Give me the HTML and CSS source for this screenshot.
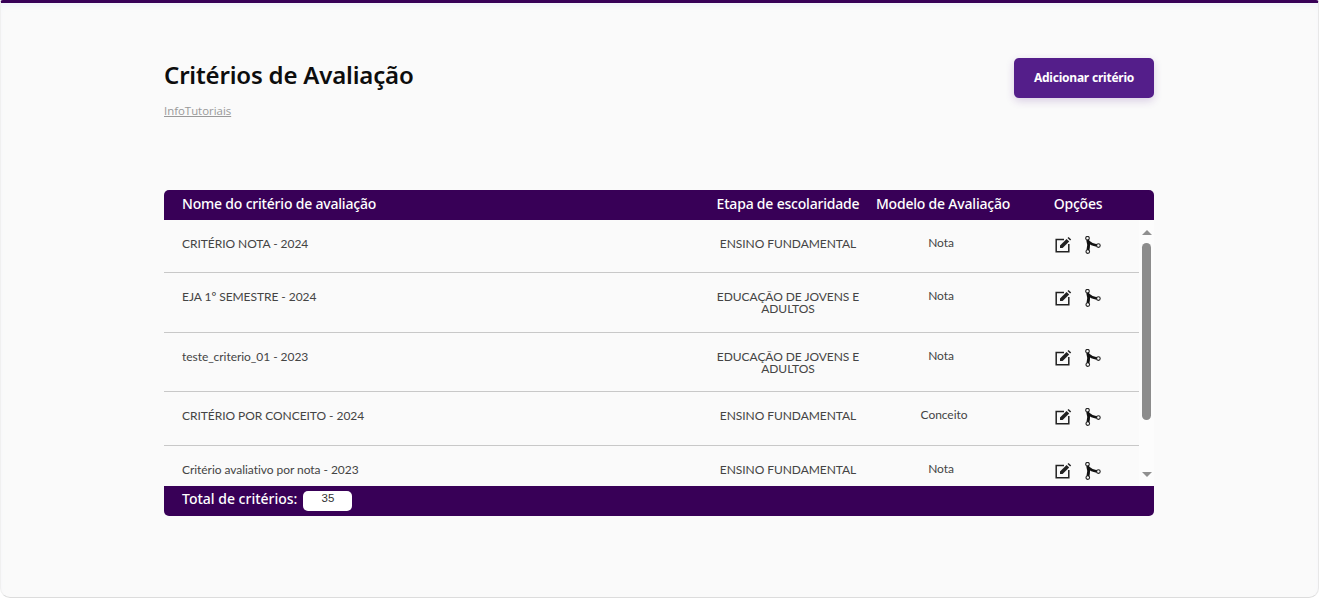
FILE: index.html
```html
<!DOCTYPE html>
<html lang="pt-BR">
<head>
    <meta charset="UTF-8">
    <meta name="viewport" content="width=device-width, initial-scale=1.0">
    <title>Critérios de Avaliação</title>
    <link rel="stylesheet" href="styles.css">
</head>
<body>
    <svg class="icon-defs" width="0" height="0">
        <symbol id="icon-edit" viewBox="0 0 17 17">
            <path d="M9 3H1.2V15.2H13.8V7.5" fill="none" stroke="#222" stroke-width="1.5"/>
            <path d="M5 11.6V9L11.6 2.4L14.2 5L7.6 11.6Z" fill="#222"/>
            <path d="M12.5 1.5L13.6 .4L16.2 3L15.1 4.1Z" fill="#222"/>
        </symbol>
        <symbol id="icon-path" viewBox="0 0 17 18">
            <circle cx="2.5" cy="2.2" r="1.8" fill="none" stroke="#222" stroke-width="1.1"/>
            <circle cx="2.8" cy="15.6" r="1.8" fill="none" stroke="#222" stroke-width="1.1"/>
            <circle cx="13.4" cy="9.6" r="1.8" fill="none" stroke="#222" stroke-width="1.1"/>
            <path d="M2.6 3.8C3.8 7 3.8 11 2.9 14" fill="none" stroke="#111" stroke-width="2.8"/>
            <path d="M3.4 5.6C5.4 7.6 8 8.8 11.8 9.5" fill="none" stroke="#111" stroke-width="2.6"/>
        </symbol>
    </svg>

    <main class="page">
        <div class="content">
            <header class="page-header">
                <div>
                    <h1 class="page-title">Critérios de Avaliação</h1>
                    <a class="crumb" href="#">InfoTutoriais</a>
                </div>
                <button class="add-btn">Adicionar critério</button>
            </header>

            <section class="panel">
                <div class="panel-head grid-cols">
                    <div>Nome do critério de avaliação</div>
                    <div class="center">Etapa de escolaridade</div>
                    <div class="center">Modelo de Avaliação</div>
                    <div class="center">Opções</div>
                </div>

                <div class="panel-body">
                    <div class="rows">
                        <div class="row row-a grid-cols">
                            <div>CRITÉRIO NOTA - 2024</div>
                            <div class="center">ENSINO FUNDAMENTAL</div>
                            <div class="center model">Nota</div>
                            <div class="actions">
                                <svg class="icon"><use href="#icon-edit"/></svg>
                                <svg class="icon"><use href="#icon-path"/></svg>
                            </div>
                        </div>
                        <div class="row row-b grid-cols">
                            <div>EJA 1º SEMESTRE - 2024</div>
                            <div class="center">EDUCAÇÃO DE JOVENS E ADULTOS</div>
                            <div class="center model">Nota</div>
                            <div class="actions">
                                <svg class="icon"><use href="#icon-edit"/></svg>
                                <svg class="icon"><use href="#icon-path"/></svg>
                            </div>
                        </div>
                        <div class="row row-b grid-cols">
                            <div>teste_criterio_01 - 2023</div>
                            <div class="center">EDUCAÇÃO DE JOVENS E ADULTOS</div>
                            <div class="center model">Nota</div>
                            <div class="actions">
                                <svg class="icon"><use href="#icon-edit"/></svg>
                                <svg class="icon"><use href="#icon-path"/></svg>
                            </div>
                        </div>
                        <div class="row row-a grid-cols">
                            <div>CRITÉRIO POR CONCEITO - 2024</div>
                            <div class="center">ENSINO FUNDAMENTAL</div>
                            <div class="center model model-wide">Conceito</div>
                            <div class="actions">
                                <svg class="icon"><use href="#icon-edit"/></svg>
                                <svg class="icon"><use href="#icon-path"/></svg>
                            </div>
                        </div>
                        <div class="row row-a grid-cols">
                            <div>Critério avaliativo por nota - 2023</div>
                            <div class="center">ENSINO FUNDAMENTAL</div>
                            <div class="center model">Nota</div>
                            <div class="actions">
                                <svg class="icon"><use href="#icon-edit"/></svg>
                                <svg class="icon"><use href="#icon-path"/></svg>
                            </div>
                        </div>
                    </div>

                    <div class="scrollbar">
                        <span class="arrow-up"></span>
                        <div class="track"><div class="thumb"></div></div>
                        <span class="arrow-down"></span>
                    </div>
                </div>

                <div class="panel-foot">
                    <span>Total de critérios:</span>
                    <span class="total">35</span>
                </div>
            </section>
        </div>
    </main>
</body>
</html>
```

FILE: styles.css
```css
* {
    box-sizing: border-box;
}

body {
    margin: 0;
    height: 598px;
    overflow: hidden;
    background: #fff;
    font-family: "Lato", sans-serif;
    color: #333;
}

.icon-defs {
    position: absolute;
}

.page {
    height: 598px;
    background: #fafafa;
    border-top: 3px solid #380057;
    border-right: 1px solid #e8e8e8;
    border-bottom: 1px solid #dcdcdc;
    border-left: 1px solid #f0f0f0;
    border-radius: 3px 3px 10px 10px;
    box-shadow: inset 0 5px 6px -3px rgba(205, 215, 255, 0.25);
}

.content {
    width: 990px;
    margin-left: 163px;
    padding-top: 55px;
}

.page-header {
    display: flex;
    justify-content: space-between;
    align-items: flex-start;
    height: 132px;
}

.page-title {
    margin: 1px 0 0;
    font-family: "Noto Sans", sans-serif;
    font-size: 24px;
    line-height: 32px;
    font-weight: 600;
    letter-spacing: -0.18px;
    color: #0d0d0d;
}

.crumb {
    display: block;
    margin-top: 12px;
    font-family: "Open Sans", sans-serif;
    font-size: 11.4px;
    line-height: 16px;
    color: #999;
}

.add-btn {
    width: 140px;
    height: 40px;
    padding-bottom: 2px;
    border: none;
    border-radius: 5px;
    background: #541e8a;
    color: #fff;
    font-family: "Noto Sans", sans-serif;
    font-size: 12px;
    font-weight: 700;
    letter-spacing: -0.22px;
    box-shadow: 0 3px 8px rgba(84, 30, 138, 0.2);
}

.grid-cols {
    display: grid;
    grid-template-columns: 531px 150px 160px 110px;
    align-items: center;
}

.center {
    text-align: center;
}

.panel-head,
.panel-foot {
    height: 30px;
    background: #380057;
    color: #fff;
    font-family: "Noto Sans", sans-serif;
    font-size: 14px;
    font-weight: 500;
    padding-left: 18px;
}

.panel-head {
    border-radius: 5px 5px 0 0;
    padding-bottom: 4px;
    letter-spacing: -0.2px;
}

.panel-body {
    display: flex;
    height: 266px;
    overflow: hidden;
}

.rows {
    width: 975px;
}

.row {
    align-items: start;
    padding: 18px 0 0 18px;
    border-bottom: 1px solid #c8c8c8;
    color: #444;
    font-size: 12px;
    line-height: 12px;
    letter-spacing: -0.05px;
}

.row-a {
    height: 53.4px;
}

.row-b {
    height: 59.4px;
}

.model {
    padding-right: 4px;
    margin-top: -1px;
}

.model-wide {
    padding-right: 0;
    padding-left: 2px;
}

.actions {
    display: flex;
    justify-content: center;
    gap: 13px;
    margin-top: -2px;
}

.icon {
    width: 17px;
    height: 18px;
}

.scrollbar {
    display: flex;
    flex-direction: column;
    align-items: center;
    width: 15px;
    padding: 10px 0 9px;
    background: #fcfcfc;
}

.arrow-up,
.arrow-down {
    width: 0;
    height: 0;
    border-left: 5px solid transparent;
    border-right: 5px solid transparent;
}

.arrow-up {
    border-bottom: 5px solid #8f8f8f;
}

.arrow-down {
    border-top: 5px solid #8f8f8f;
}

.track {
    flex: 1;
    padding-top: 8px;
}

.thumb {
    width: 9px;
    height: 177px;
    border-radius: 5px;
    background: #8c8c8c;
}

.panel-foot {
    display: flex;
    align-items: center;
    gap: 6px;
    border-radius: 0 0 5px 5px;
    padding-bottom: 5px;
}

.total {
    width: 49px;
    height: 20px;
    margin-top: 5px;
    border-radius: 5px;
    background: #fff;
    color: #333;
    font-family: "Liberation Sans", sans-serif;
    font-size: 11.5px;
    line-height: 15px;
    text-align: center;
}
```
